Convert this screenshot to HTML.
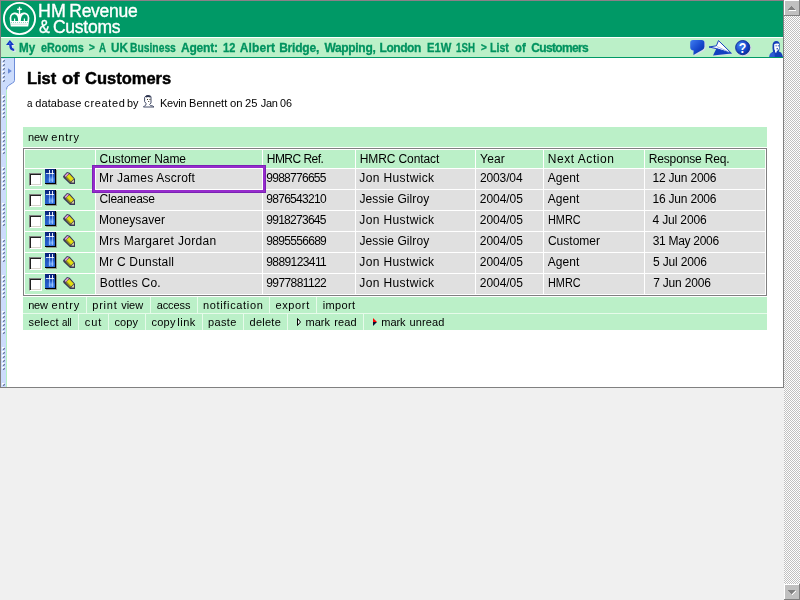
<!DOCTYPE html><html><head><meta charset="utf-8"><title>List of Customers</title><style>
html,body{margin:0;padding:0}
body{width:800px;height:600px;overflow:hidden;background:#f0f0f0;position:relative;font-family:"Liberation Sans", sans-serif}
.a,.t,svg.i{position:absolute}
.t{transform-origin:0 0;white-space:pre;line-height:20px;height:20px;color:#000}
.bc{font-weight:bold;font-size:12px;color:#00935f;-webkit-text-stroke:.3px currentColor}
.title{font-weight:bold;font-size:16.5px;-webkit-text-stroke:.45px currentColor}
.logo{font-size:17.5px;color:#fff;-webkit-text-stroke:.35px currentColor}
.tah{font-size:11px}
.tre{font-size:12px}
.g{will-change:transform;height:0}
.lg{background:#bbf0c8}
.gc{background:#e0e0e0}
.cb{width:11px;height:11px;background:#fff;border:1px solid;border-color:#808080 #fff #fff #808080;box-shadow:inset 1px 1px 0 #202020, inset -1px -1px 0 #d8d4cc;}
</style></head><body>
<div class="a" style="left:0;top:0;width:784px;height:388px;background:#808080"></div>
<div class="a" style="left:0;top:0;width:784px;height:1px;background:#8c8088"></div>
<div class="a" id="content" style="left:1px;top:58px;width:782px;height:329px;background:#fff"></div>
<div class="a" id="header" style="left:1px;top:1px;width:782px;height:36px;background:#009966"></div>
<div class="a" style="left:1px;top:37px;width:782px;height:1px;background:#fff"></div>
<div class="a" id="crumbs" style="left:1px;top:38px;width:782px;height:19px;background:#bbf0c8"></div>
<div class="a" style="left:1px;top:57px;width:782px;height:1px;background:#009966"></div>
<svg class="i" style="left:0;top:0" width="40" height="38" viewBox="0 0 40 38">
<circle cx="19.5" cy="18.5" r="15.6" fill="none" stroke="#fff" stroke-width="1.9"/>
<path fill="#fff" d="M10.8 26.6 L9.9 21 Q8.6 13.6 14 12.5 Q17.6 12 18.8 14 L18.8 10 L17.2 10 L17.2 8.6 L18.8 8.6 L18.8 6.8 L20.2 6.8 L20.2 8.6 L21.8 8.6 L21.8 10 L20.2 10 L20.2 14 Q21.4 12 25 12.5 Q30.4 13.6 29.1 21 L28.2 26.6 Z"/>
<path fill="#009966" d="M11.6 21 Q10.2 14.8 14.2 14.2 Q18 14 18.2 21 L15.2 21 L15.2 18.4 L14 18.4 L14 21 Z M20.8 21 Q21 14 24.8 14.2 Q28.8 14.8 27.4 21 L25 21 L25 18.4 L23.8 18.4 L23.8 21 Z"/>
<path stroke="#009966" stroke-width="0.8" stroke-dasharray="1 1" d="M11 22.5 H28 M11.5 24.2 H27.5" opacity=".5"/>
</svg>
<div id="logo" class="g"><span class="t logo" style="left:37.56px;top:0.5px;transform:scaleX(1.0191);">HM</span> <span class="t logo" style="left:69.26px;top:0.5px;letter-spacing:-0.259px;">Revenue</span> <span class="t logo" style="left:39.17px;top:17px;transform:scaleX(0.9237);">&amp;</span> <span class="t logo" style="left:52.92px;top:17px;letter-spacing:-0.245px;">Customs</span></div>
<svg class="i" style="left:4px;top:38px" width="14" height="16" viewBox="4 38 14 16">
<path d="M10.8 41.2 L15.2 46 L12.6 46 Q12.6 49.5 15.6 50 L15.6 52 Q10.6 52 10.2 46 L7.4 46 Z" fill="#e8e4f4" opacity=".9"/>
<path d="M9.9 40 L14 45 L11.6 45 Q11.6 48.4 14.2 48.8 L14.2 51 Q9.4 50.8 9.2 45 L6 45 Z" fill="#1238c4"/>
<circle cx="9.8" cy="43.4" r="0.9" fill="#3f78f0"/>
</svg>
<div id="bc" class="g"><span class="t bc" style="left:19.08px;top:38px;transform:scaleX(0.9711);">My</span> <span class="t bc" style="left:40.73px;top:38px;transform:scaleX(0.9036);">eRooms</span> <span class="t bc" style="left:88.94px;top:38px;font-size:10px;">&gt;</span> <span class="t bc" style="left:98.78px;top:38px;transform:scaleX(0.8157);">A</span> <span class="t bc" style="left:110.9px;top:38px;transform:scaleX(0.9741);">UK</span> <span class="t bc" style="left:130.48px;top:38px;transform:scaleX(0.8595);">Business</span> <span class="t bc" style="left:181.03px;top:38px;letter-spacing:-0.201px;">Agent:</span> <span class="t bc" style="left:222.9px;top:38px;transform:scaleX(0.9183);">12</span> <span class="t bc" style="left:239.72px;top:38px;letter-spacing:0.135px;">Albert</span> <span class="t bc" style="left:279.15px;top:38px;letter-spacing:-0.196px;">Bridge,</span> <span class="t bc" style="left:324.44px;top:38px;letter-spacing:-0.323px;">Wapping,</span> <span class="t bc" style="left:379.61px;top:38px;letter-spacing:-0.471px;">London</span> <span class="t bc" style="left:426.65px;top:38px;transform:scaleX(0.9363);">E1W</span> <span class="t bc" style="left:456.0px;top:38px;transform:scaleX(0.8099);">1SH</span> <span class="t bc" style="left:480.88px;top:38px;font-size:10px;">&gt;</span> <span class="t bc" style="left:490.17px;top:38px;transform:scaleX(0.8828);">List</span> <span class="t bc" style="left:515.41px;top:38px;transform:scaleX(0.9453);">of</span> <span class="t bc" style="left:531.28px;top:38px;letter-spacing:-0.653px;">Customers</span></div>
<svg class="i" style="left:686px;top:38px" width="98" height="20" viewBox="686 38 98 20">
<defs>
<linearGradient id="gb" x1="0" y1="0" x2="1" y2="1"><stop offset="0" stop-color="#3f7df0"/><stop offset=".55" stop-color="#1648cc"/><stop offset="1" stop-color="#062a9c"/></linearGradient>
<radialGradient id="gh" cx=".35" cy=".35" r=".75"><stop offset="0" stop-color="#4a86f4"/><stop offset=".6" stop-color="#1446c8"/><stop offset="1" stop-color="#062690"/></radialGradient>
</defs>
<path d="M694 41.2 H702.8 Q705.6 41.2 705.6 43.8 V48 Q705.6 50 703.8 51 L694.6 56.2 L694.8 51.8 Q691.4 51.4 691.4 48.4 V44 Q691.4 41.2 694 41.2Z" fill="#dcdcec" opacity=".8"/>
<path d="M693 40 H701.6 Q704.4 40 704.4 42.6 V46.8 Q704.4 48.8 702.6 49.8 L693.4 55 L693.6 50.6 Q690.2 50.2 690.2 47.2 V42.8 Q690.2 40 693 40Z" fill="url(#gb)"/>
<path d="M719.2 41.6 L732.6 54.2 L714 56.2 L717 49.6 L709.6 48 L717.2 46.8Z" fill="#dcdcec" opacity=".8"/>
<path d="M718.5 40.6 L731.4 53.2 L716.4 48.6 L709 47 L716.4 45.8Z" fill="#fff" stroke="#1440c0" stroke-width="1" stroke-linejoin="round"/>
<path d="M716.4 48.4 L731.6 53.4 L713 55.4Z" fill="#1440c0"/>
<path d="M717 46.6 L729 52" stroke="#7c98e0" stroke-width=".7" fill="none"/>
<circle cx="743.7" cy="48.6" r="7.7" fill="#d4d4e6" opacity=".9"/>
<circle cx="742.7" cy="47.6" r="7.1" fill="url(#gh)" stroke="#0c2c94" stroke-width=".9"/>
<path d="M773 51.8 Q772.2 47 772.6 44.6 Q773.2 41 776.2 41 Q779.7 41 779.7 44.6 L779.5 49.4 L778.8 51.6 Q781.6 52.4 782.2 54.4 L783 57 H769.4 L770 54.4 Q770.6 52.8 773 51.8Z" fill="#1440b8"/>
<path d="M769.4 57 L769.8 54.4 Q770.4 53 772.6 52.4 L774.4 52.2 L774.8 57Z" fill="#2c5cd4"/>
<path d="M774.2 44.2 Q776.4 43 779 43.8 L779 48.8 Q778.2 50.8 776.8 51 L776.6 52.4 L775 52.4 L775 50.6 Q774.2 49.6 774.2 48Z" fill="#fff"/>
<rect x="775.6" y="45.2" width="1" height="1.2" fill="#1440b8"/><rect x="777.8" y="45.2" width="1" height="1.2" fill="#1440b8"/><rect x="776.6" y="48" width="1.2" height="1.4" fill="#1440b8"/>
<text transform="translate(742.6 53) scale(.86 1)" text-anchor="middle" font-family="Liberation Sans, sans-serif" font-weight="bold" font-size="14.4" fill="#fff">?</text>
</svg>
<svg class="i" style="left:1px;top:58px" width="16" height="329" viewBox="1 58 16 329">
<defs><pattern id="dots" x="0" y="59" width="6" height="36" patternUnits="userSpaceOnUse">
<rect x="2" y="0" width="2" height="1" fill="#fff"/><rect x="2" y="1" width="1" height="1" fill="#fff" opacity=".8"/><rect x="4" y="1" width="1" height="1" fill="#6c7aa0"/><rect x="3" y="2" width="1" height="1" fill="#6c7aa0"/><rect x="3" y="1" width="1" height="1" fill="#6c7aa0" opacity=".4"/><rect x="4" y="2" width="1" height="1" fill="#6c7aa0" opacity=".4"/><rect x="2" y="4" width="2" height="1" fill="#fff"/><rect x="2" y="5" width="1" height="1" fill="#fff" opacity=".8"/><rect x="4" y="5" width="1" height="1" fill="#6c7aa0"/><rect x="3" y="6" width="1" height="1" fill="#6c7aa0"/><rect x="3" y="5" width="1" height="1" fill="#6c7aa0" opacity=".4"/><rect x="4" y="6" width="1" height="1" fill="#6c7aa0" opacity=".4"/><rect x="2" y="8" width="2" height="1" fill="#fff"/><rect x="2" y="9" width="1" height="1" fill="#fff" opacity=".8"/><rect x="4" y="9" width="1" height="1" fill="#6c7aa0"/><rect x="3" y="10" width="1" height="1" fill="#6c7aa0"/><rect x="3" y="9" width="1" height="1" fill="#6c7aa0" opacity=".4"/><rect x="4" y="10" width="1" height="1" fill="#6c7aa0" opacity=".4"/><rect x="2" y="12" width="2" height="1" fill="#fff"/><rect x="2" y="13" width="1" height="1" fill="#fff" opacity=".8"/><rect x="4" y="13" width="1" height="1" fill="#6c7aa0"/><rect x="3" y="14" width="1" height="1" fill="#6c7aa0"/><rect x="3" y="13" width="1" height="1" fill="#6c7aa0" opacity=".4"/><rect x="4" y="14" width="1" height="1" fill="#6c7aa0" opacity=".4"/><rect x="2" y="16" width="2" height="1" fill="#fff"/><rect x="2" y="17" width="1" height="1" fill="#fff" opacity=".8"/><rect x="4" y="17" width="1" height="1" fill="#6c7aa0"/><rect x="3" y="18" width="1" height="1" fill="#6c7aa0"/><rect x="3" y="17" width="1" height="1" fill="#6c7aa0" opacity=".4"/><rect x="4" y="18" width="1" height="1" fill="#6c7aa0" opacity=".4"/><rect x="2" y="20" width="2" height="1" fill="#fff"/><rect x="2" y="21" width="1" height="1" fill="#fff" opacity=".8"/><rect x="4" y="21" width="1" height="1" fill="#6c7aa0"/><rect x="3" y="22" width="1" height="1" fill="#6c7aa0"/><rect x="3" y="21" width="1" height="1" fill="#6c7aa0" opacity=".4"/><rect x="4" y="22" width="1" height="1" fill="#6c7aa0" opacity=".4"/>
</pattern></defs>
<path d="M1 58 H14.5 V80.5 Q14.5 82 12.5 83 L8.5 85.5 Q6.5 86.8 6.5 89 V387 H1Z" fill="#ccdcfc"/>
<path d="M14.5 58 V80.5 Q14.5 82 12.5 83 L8.5 85.5 Q6.5 86.8 6.5 89.5" fill="none" stroke="#6c8cd8" stroke-width="1"/>
<rect x="6" y="90" width="1" height="297" fill="#b4f0c4"/>
<rect x="1" y="58" width="6" height="329" fill="url(#dots)"/>
<path d="M8 68.2 L11.8 71 L8 73.8Z" fill="#6c8cd8"/>
</svg>
<h1 class="g" style="margin:0;font-size:0"><span class="t title" style="left:26.98px;top:68px;letter-spacing:-0.009px;">List</span> <span class="t title" style="left:61.96px;top:68px;transform:scaleX(1.1229);">of</span> <span class="t title" style="left:84.96px;top:68px;letter-spacing:0.008px;">Customers</span></h1>
<div id="sub" class="g"><span class="t tah" style="left:26.82px;top:93px;transform:scaleX(0.8947);">a</span> <span class="t tah" style="left:35.24px;top:93px;letter-spacing:0.11px;">database</span> <span class="t tah" style="left:84.33px;top:93px;letter-spacing:0.641px;">created</span> <span class="t tah" style="left:126.57px;top:93px;transform:scaleX(0.9863);">by</span> <span class="t tah" style="left:159.98px;top:93px;letter-spacing:-0.19px;">Kevin</span> <span class="t tah" style="left:189.0px;top:93px;letter-spacing:0.047px;">Bennett</span> <span class="t tah" style="left:230.33px;top:93px;transform:scaleX(1.0287);">on</span> <span class="t tah" style="left:245.45px;top:93px;transform:scaleX(1.0142);">25</span> <span class="t tah" style="left:260.83px;top:93px;letter-spacing:-0.37px;">Jan</span> <span class="t tah" style="left:279.77px;top:93px;transform:scaleX(0.9818);">06</span></div>
<svg class="i" style="left:142px;top:94px" width="14" height="14" viewBox="142 94 14 14">
<path d="M146.4 95.5 H149.6 L151 96.6 V103 L149.6 104.6 L150.6 105.6 L152.8 106 L154 107 H143.4 L144.6 105.8 L146 104.8 V103.4 L144.6 101.6 V97.4Z" fill="#fff" stroke="#444c68" stroke-width="1" stroke-linejoin="round"/>
<path d="M145.6 97 Q148 95.4 150.6 97" stroke="#30364e" stroke-width="1.4" fill="none"/>
<rect x="147" y="99" width="1" height="1" fill="#3a3420"/><rect x="149.4" y="99" width="1" height="1" fill="#3a3420"/><rect x="148.2" y="101" width="1" height="1" fill="#3a3420"/>
</svg>
<div class="a lg" style="left:23px;top:127px;width:744px;height:20px"></div>
<div id="newentry" class="g"><span class="t tah" style="left:28.09px;top:127px;letter-spacing:-0.134px;">new</span> <span class="t tah" style="left:51.32px;top:127px;letter-spacing:0.804px;">entry</span></div>
<div class="a" id="tbl" style="left:23px;top:148px;width:742px;height:146px;border:1px solid #808080;background:#fff"></div>
<div class="a lg" style="left:25px;top:150px;width:70px;height:18px"></div>
<div class="a lg" style="left:96px;top:150px;width:166px;height:18px"></div>
<div class="a lg" style="left:263px;top:150px;width:92px;height:18px"></div>
<div class="a lg" style="left:356px;top:150px;width:119px;height:18px"></div>
<div class="a lg" style="left:476px;top:150px;width:67px;height:18px"></div>
<div class="a lg" style="left:544px;top:150px;width:100px;height:18px"></div>
<div class="a lg" style="left:645px;top:150px;width:120px;height:18px"></div>
<div class="a lg" style="left:25px;top:169px;width:70px;height:20px"></div>
<div class="a gc" style="left:96px;top:169px;width:166px;height:20px"></div>
<div class="a gc" style="left:263px;top:169px;width:92px;height:20px"></div>
<div class="a gc" style="left:356px;top:169px;width:119px;height:20px"></div>
<div class="a gc" style="left:476px;top:169px;width:67px;height:20px"></div>
<div class="a gc" style="left:544px;top:169px;width:100px;height:20px"></div>
<div class="a gc" style="left:645px;top:169px;width:120px;height:20px"></div>
<div class="a lg" style="left:25px;top:190px;width:70px;height:20px"></div>
<div class="a gc" style="left:96px;top:190px;width:166px;height:20px"></div>
<div class="a gc" style="left:263px;top:190px;width:92px;height:20px"></div>
<div class="a gc" style="left:356px;top:190px;width:119px;height:20px"></div>
<div class="a gc" style="left:476px;top:190px;width:67px;height:20px"></div>
<div class="a gc" style="left:544px;top:190px;width:100px;height:20px"></div>
<div class="a gc" style="left:645px;top:190px;width:120px;height:20px"></div>
<div class="a lg" style="left:25px;top:211px;width:70px;height:20px"></div>
<div class="a gc" style="left:96px;top:211px;width:166px;height:20px"></div>
<div class="a gc" style="left:263px;top:211px;width:92px;height:20px"></div>
<div class="a gc" style="left:356px;top:211px;width:119px;height:20px"></div>
<div class="a gc" style="left:476px;top:211px;width:67px;height:20px"></div>
<div class="a gc" style="left:544px;top:211px;width:100px;height:20px"></div>
<div class="a gc" style="left:645px;top:211px;width:120px;height:20px"></div>
<div class="a lg" style="left:25px;top:232px;width:70px;height:20px"></div>
<div class="a gc" style="left:96px;top:232px;width:166px;height:20px"></div>
<div class="a gc" style="left:263px;top:232px;width:92px;height:20px"></div>
<div class="a gc" style="left:356px;top:232px;width:119px;height:20px"></div>
<div class="a gc" style="left:476px;top:232px;width:67px;height:20px"></div>
<div class="a gc" style="left:544px;top:232px;width:100px;height:20px"></div>
<div class="a gc" style="left:645px;top:232px;width:120px;height:20px"></div>
<div class="a lg" style="left:25px;top:253px;width:70px;height:20px"></div>
<div class="a gc" style="left:96px;top:253px;width:166px;height:20px"></div>
<div class="a gc" style="left:263px;top:253px;width:92px;height:20px"></div>
<div class="a gc" style="left:356px;top:253px;width:119px;height:20px"></div>
<div class="a gc" style="left:476px;top:253px;width:67px;height:20px"></div>
<div class="a gc" style="left:544px;top:253px;width:100px;height:20px"></div>
<div class="a gc" style="left:645px;top:253px;width:120px;height:20px"></div>
<div class="a lg" style="left:25px;top:274px;width:70px;height:20px"></div>
<div class="a gc" style="left:96px;top:274px;width:166px;height:20px"></div>
<div class="a gc" style="left:263px;top:274px;width:92px;height:20px"></div>
<div class="a gc" style="left:356px;top:274px;width:119px;height:20px"></div>
<div class="a gc" style="left:476px;top:274px;width:67px;height:20px"></div>
<div class="a gc" style="left:544px;top:274px;width:100px;height:20px"></div>
<div class="a gc" style="left:645px;top:274px;width:120px;height:20px"></div>
<div class="a" style="left:92px;top:165px;width:168px;height:22px;border:3px solid #962ccc;box-shadow:inset 0 0 0 1px #fff, 0 0 0 0 #000"></div>
<div class="a" style="left:92px;top:165px;width:172px;height:26px;border:1px solid #7a22b4"></div>
<div class="a cb" style="left:29px;top:173px"></div>
<svg class="i" style="left:45px;top:169px" width="12" height="16" viewBox="0 0 12 16">
<defs><linearGradient id="db0" x1="0" y1="0" x2="0" y2="1"><stop offset="0" stop-color="#082478"/><stop offset=".27" stop-color="#0a2c8c"/><stop offset=".3" stop-color="#2050b8"/><stop offset="1" stop-color="#2460cc"/></linearGradient>
<radialGradient id="dg0" cx=".6" cy=".65" r=".5"><stop offset="0" stop-color="#7cb4ff"/><stop offset=".5" stop-color="#4c8cf0" stop-opacity=".8"/><stop offset="1" stop-color="#2a68dc" stop-opacity="0"/></radialGradient></defs>
<rect x="1" y="1" width="11" height="15" fill="#7c6c6c" opacity=".6"/>
<rect x="0" y="0" width="11" height="15" fill="#000"/>
<rect x="0" y="0" width="10" height="14" fill="url(#db0)"/>
<rect x="1" y="5" width="9" height="9" fill="url(#dg0)"/>
<rect x="4" y="1" width="1" height="4" fill="#fff" opacity=".9"/><rect x="7" y="1" width="1" height="4" fill="#fff" opacity=".9"/><rect x="4" y="5" width="1" height="8" fill="#c4dcff" opacity=".6"/><rect x="7" y="5" width="1" height="8" fill="#c4dcff" opacity=".6"/>
<rect x="1" y="4" width="8" height="1" fill="#fff" opacity=".8"/>
</svg>
<svg class="i" style="left:62px;top:171px" width="15" height="14" viewBox="62 171 15 14">
<path d="M63 176.2 L67 172 L69.7 172.7 L75 178.7 L75 183.9 L70 183.9 L63.6 178Z" fill="#3a3a58"/>
<path d="M64.5 175.9 L67.2 173.1 L69 173.6 L65.9 176.9Z" fill="#e49cd8"/>
<path d="M66.5 176.7 L69.3 173.9 L73.8 178.8 L71 181.6Z" fill="#e2de12"/>
<path d="M65.5 177.5 L66.5 176.7 L71 181.6 L70.2 182.5Z" fill="#8e8a24"/>
<path d="M71.2 182.4 L73.8 179.6 L74 182.6Z" fill="#ece0a4"/>
</svg>
<div class="a cb" style="left:29px;top:194px"></div>
<svg class="i" style="left:45px;top:190px" width="12" height="16" viewBox="0 0 12 16">
<defs><linearGradient id="db1" x1="0" y1="0" x2="0" y2="1"><stop offset="0" stop-color="#082478"/><stop offset=".27" stop-color="#0a2c8c"/><stop offset=".3" stop-color="#2050b8"/><stop offset="1" stop-color="#2460cc"/></linearGradient>
<radialGradient id="dg1" cx=".6" cy=".65" r=".5"><stop offset="0" stop-color="#7cb4ff"/><stop offset=".5" stop-color="#4c8cf0" stop-opacity=".8"/><stop offset="1" stop-color="#2a68dc" stop-opacity="0"/></radialGradient></defs>
<rect x="1" y="1" width="11" height="15" fill="#7c6c6c" opacity=".6"/>
<rect x="0" y="0" width="11" height="15" fill="#000"/>
<rect x="0" y="0" width="10" height="14" fill="url(#db1)"/>
<rect x="1" y="5" width="9" height="9" fill="url(#dg1)"/>
<rect x="4" y="1" width="1" height="4" fill="#fff" opacity=".9"/><rect x="7" y="1" width="1" height="4" fill="#fff" opacity=".9"/><rect x="4" y="5" width="1" height="8" fill="#c4dcff" opacity=".6"/><rect x="7" y="5" width="1" height="8" fill="#c4dcff" opacity=".6"/>
<rect x="1" y="4" width="8" height="1" fill="#fff" opacity=".8"/>
</svg>
<svg class="i" style="left:62px;top:192px" width="15" height="14" viewBox="62 171 15 14">
<path d="M63 176.2 L67 172 L69.7 172.7 L75 178.7 L75 183.9 L70 183.9 L63.6 178Z" fill="#3a3a58"/>
<path d="M64.5 175.9 L67.2 173.1 L69 173.6 L65.9 176.9Z" fill="#e49cd8"/>
<path d="M66.5 176.7 L69.3 173.9 L73.8 178.8 L71 181.6Z" fill="#e2de12"/>
<path d="M65.5 177.5 L66.5 176.7 L71 181.6 L70.2 182.5Z" fill="#8e8a24"/>
<path d="M71.2 182.4 L73.8 179.6 L74 182.6Z" fill="#ece0a4"/>
</svg>
<div class="a cb" style="left:29px;top:215px"></div>
<svg class="i" style="left:45px;top:211px" width="12" height="16" viewBox="0 0 12 16">
<defs><linearGradient id="db2" x1="0" y1="0" x2="0" y2="1"><stop offset="0" stop-color="#082478"/><stop offset=".27" stop-color="#0a2c8c"/><stop offset=".3" stop-color="#2050b8"/><stop offset="1" stop-color="#2460cc"/></linearGradient>
<radialGradient id="dg2" cx=".6" cy=".65" r=".5"><stop offset="0" stop-color="#7cb4ff"/><stop offset=".5" stop-color="#4c8cf0" stop-opacity=".8"/><stop offset="1" stop-color="#2a68dc" stop-opacity="0"/></radialGradient></defs>
<rect x="1" y="1" width="11" height="15" fill="#7c6c6c" opacity=".6"/>
<rect x="0" y="0" width="11" height="15" fill="#000"/>
<rect x="0" y="0" width="10" height="14" fill="url(#db2)"/>
<rect x="1" y="5" width="9" height="9" fill="url(#dg2)"/>
<rect x="4" y="1" width="1" height="4" fill="#fff" opacity=".9"/><rect x="7" y="1" width="1" height="4" fill="#fff" opacity=".9"/><rect x="4" y="5" width="1" height="8" fill="#c4dcff" opacity=".6"/><rect x="7" y="5" width="1" height="8" fill="#c4dcff" opacity=".6"/>
<rect x="1" y="4" width="8" height="1" fill="#fff" opacity=".8"/>
</svg>
<svg class="i" style="left:62px;top:213px" width="15" height="14" viewBox="62 171 15 14">
<path d="M63 176.2 L67 172 L69.7 172.7 L75 178.7 L75 183.9 L70 183.9 L63.6 178Z" fill="#3a3a58"/>
<path d="M64.5 175.9 L67.2 173.1 L69 173.6 L65.9 176.9Z" fill="#e49cd8"/>
<path d="M66.5 176.7 L69.3 173.9 L73.8 178.8 L71 181.6Z" fill="#e2de12"/>
<path d="M65.5 177.5 L66.5 176.7 L71 181.6 L70.2 182.5Z" fill="#8e8a24"/>
<path d="M71.2 182.4 L73.8 179.6 L74 182.6Z" fill="#ece0a4"/>
</svg>
<div class="a cb" style="left:29px;top:236px"></div>
<svg class="i" style="left:45px;top:232px" width="12" height="16" viewBox="0 0 12 16">
<defs><linearGradient id="db3" x1="0" y1="0" x2="0" y2="1"><stop offset="0" stop-color="#082478"/><stop offset=".27" stop-color="#0a2c8c"/><stop offset=".3" stop-color="#2050b8"/><stop offset="1" stop-color="#2460cc"/></linearGradient>
<radialGradient id="dg3" cx=".6" cy=".65" r=".5"><stop offset="0" stop-color="#7cb4ff"/><stop offset=".5" stop-color="#4c8cf0" stop-opacity=".8"/><stop offset="1" stop-color="#2a68dc" stop-opacity="0"/></radialGradient></defs>
<rect x="1" y="1" width="11" height="15" fill="#7c6c6c" opacity=".6"/>
<rect x="0" y="0" width="11" height="15" fill="#000"/>
<rect x="0" y="0" width="10" height="14" fill="url(#db3)"/>
<rect x="1" y="5" width="9" height="9" fill="url(#dg3)"/>
<rect x="4" y="1" width="1" height="4" fill="#fff" opacity=".9"/><rect x="7" y="1" width="1" height="4" fill="#fff" opacity=".9"/><rect x="4" y="5" width="1" height="8" fill="#c4dcff" opacity=".6"/><rect x="7" y="5" width="1" height="8" fill="#c4dcff" opacity=".6"/>
<rect x="1" y="4" width="8" height="1" fill="#fff" opacity=".8"/>
</svg>
<svg class="i" style="left:62px;top:234px" width="15" height="14" viewBox="62 171 15 14">
<path d="M63 176.2 L67 172 L69.7 172.7 L75 178.7 L75 183.9 L70 183.9 L63.6 178Z" fill="#3a3a58"/>
<path d="M64.5 175.9 L67.2 173.1 L69 173.6 L65.9 176.9Z" fill="#e49cd8"/>
<path d="M66.5 176.7 L69.3 173.9 L73.8 178.8 L71 181.6Z" fill="#e2de12"/>
<path d="M65.5 177.5 L66.5 176.7 L71 181.6 L70.2 182.5Z" fill="#8e8a24"/>
<path d="M71.2 182.4 L73.8 179.6 L74 182.6Z" fill="#ece0a4"/>
</svg>
<div class="a cb" style="left:29px;top:257px"></div>
<svg class="i" style="left:45px;top:253px" width="12" height="16" viewBox="0 0 12 16">
<defs><linearGradient id="db4" x1="0" y1="0" x2="0" y2="1"><stop offset="0" stop-color="#082478"/><stop offset=".27" stop-color="#0a2c8c"/><stop offset=".3" stop-color="#2050b8"/><stop offset="1" stop-color="#2460cc"/></linearGradient>
<radialGradient id="dg4" cx=".6" cy=".65" r=".5"><stop offset="0" stop-color="#7cb4ff"/><stop offset=".5" stop-color="#4c8cf0" stop-opacity=".8"/><stop offset="1" stop-color="#2a68dc" stop-opacity="0"/></radialGradient></defs>
<rect x="1" y="1" width="11" height="15" fill="#7c6c6c" opacity=".6"/>
<rect x="0" y="0" width="11" height="15" fill="#000"/>
<rect x="0" y="0" width="10" height="14" fill="url(#db4)"/>
<rect x="1" y="5" width="9" height="9" fill="url(#dg4)"/>
<rect x="4" y="1" width="1" height="4" fill="#fff" opacity=".9"/><rect x="7" y="1" width="1" height="4" fill="#fff" opacity=".9"/><rect x="4" y="5" width="1" height="8" fill="#c4dcff" opacity=".6"/><rect x="7" y="5" width="1" height="8" fill="#c4dcff" opacity=".6"/>
<rect x="1" y="4" width="8" height="1" fill="#fff" opacity=".8"/>
</svg>
<svg class="i" style="left:62px;top:255px" width="15" height="14" viewBox="62 171 15 14">
<path d="M63 176.2 L67 172 L69.7 172.7 L75 178.7 L75 183.9 L70 183.9 L63.6 178Z" fill="#3a3a58"/>
<path d="M64.5 175.9 L67.2 173.1 L69 173.6 L65.9 176.9Z" fill="#e49cd8"/>
<path d="M66.5 176.7 L69.3 173.9 L73.8 178.8 L71 181.6Z" fill="#e2de12"/>
<path d="M65.5 177.5 L66.5 176.7 L71 181.6 L70.2 182.5Z" fill="#8e8a24"/>
<path d="M71.2 182.4 L73.8 179.6 L74 182.6Z" fill="#ece0a4"/>
</svg>
<div class="a cb" style="left:29px;top:278px"></div>
<svg class="i" style="left:45px;top:274px" width="12" height="16" viewBox="0 0 12 16">
<defs><linearGradient id="db5" x1="0" y1="0" x2="0" y2="1"><stop offset="0" stop-color="#082478"/><stop offset=".27" stop-color="#0a2c8c"/><stop offset=".3" stop-color="#2050b8"/><stop offset="1" stop-color="#2460cc"/></linearGradient>
<radialGradient id="dg5" cx=".6" cy=".65" r=".5"><stop offset="0" stop-color="#7cb4ff"/><stop offset=".5" stop-color="#4c8cf0" stop-opacity=".8"/><stop offset="1" stop-color="#2a68dc" stop-opacity="0"/></radialGradient></defs>
<rect x="1" y="1" width="11" height="15" fill="#7c6c6c" opacity=".6"/>
<rect x="0" y="0" width="11" height="15" fill="#000"/>
<rect x="0" y="0" width="10" height="14" fill="url(#db5)"/>
<rect x="1" y="5" width="9" height="9" fill="url(#dg5)"/>
<rect x="4" y="1" width="1" height="4" fill="#fff" opacity=".9"/><rect x="7" y="1" width="1" height="4" fill="#fff" opacity=".9"/><rect x="4" y="5" width="1" height="8" fill="#c4dcff" opacity=".6"/><rect x="7" y="5" width="1" height="8" fill="#c4dcff" opacity=".6"/>
<rect x="1" y="4" width="8" height="1" fill="#fff" opacity=".8"/>
</svg>
<svg class="i" style="left:62px;top:276px" width="15" height="14" viewBox="62 171 15 14">
<path d="M63 176.2 L67 172 L69.7 172.7 L75 178.7 L75 183.9 L70 183.9 L63.6 178Z" fill="#3a3a58"/>
<path d="M64.5 175.9 L67.2 173.1 L69 173.6 L65.9 176.9Z" fill="#e49cd8"/>
<path d="M66.5 176.7 L69.3 173.9 L73.8 178.8 L71 181.6Z" fill="#e2de12"/>
<path d="M65.5 177.5 L66.5 176.7 L71 181.6 L70.2 182.5Z" fill="#8e8a24"/>
<path d="M71.2 182.4 L73.8 179.6 L74 182.6Z" fill="#ece0a4"/>
</svg>
<div id="tt" class="g"><span class="t tre" style="left:99.6px;top:149px;letter-spacing:-0.079px;">Customer Name</span> <span class="t tre" style="left:266.76px;top:149px;letter-spacing:-0.52px;">HMRC Ref.</span> <span class="t tre" style="left:359.68px;top:149px;letter-spacing:-0.092px;">HMRC Contact</span> <span class="t tre" style="left:480.07px;top:149px;letter-spacing:0.162px;">Year</span> <span class="t tre" style="left:547.8px;top:149px;letter-spacing:0.538px;">Next Action</span> <span class="t tre" style="left:648.72px;top:149px;letter-spacing:-0.151px;">Response Req.</span> <span class="t tre" style="left:98.95px;top:168px;letter-spacing:0.22px;">Mr James Ascroft</span> <span class="t tre" style="left:266.22px;top:168px;letter-spacing:-0.718px;">9988776655</span> <span class="t tre" style="left:359.31px;top:168px;letter-spacing:0.372px;">Jon Hustwick</span> <span class="t tre" style="left:479.98px;top:168px;letter-spacing:-0.126px;">2003/04</span> <span class="t tre" style="left:547.72px;top:168px;letter-spacing:0.073px;">Agent</span> <span class="t tre" style="left:652.51px;top:168px;letter-spacing:-0.207px;">12 Jun 2006</span> <span class="t tre" style="left:99.6px;top:189px;letter-spacing:-0.247px;">Cleanease</span> <span class="t tre" style="left:266.25px;top:189px;letter-spacing:-0.711px;">9876543210</span> <span class="t tre" style="left:359.49px;top:189px;letter-spacing:0.083px;">Jessie Gilroy</span> <span class="t tre" style="left:479.86px;top:189px;letter-spacing:-0.066px;">2004/05</span> <span class="t tre" style="left:547.72px;top:189px;letter-spacing:0.073px;">Agent</span> <span class="t tre" style="left:652.51px;top:189px;letter-spacing:-0.207px;">16 Jun 2006</span> <span class="t tre" style="left:98.92px;top:210px;letter-spacing:0.089px;">Moneysaver</span> <span class="t tre" style="left:266.22px;top:210px;letter-spacing:-0.718px;">9918273645</span> <span class="t tre" style="left:359.31px;top:210px;letter-spacing:0.372px;">Jon Hustwick</span> <span class="t tre" style="left:479.86px;top:210px;letter-spacing:-0.066px;">2004/05</span> <span class="t tre" style="left:547.9px;top:210px;transform:scaleX(0.9058);">HMRC</span> <span class="t tre" style="left:652.44px;top:210px;letter-spacing:-0.128px;">4 Jul 2006</span> <span class="t tre" style="left:99.03px;top:231px;letter-spacing:0.325px;">Mrs Margaret Jordan</span> <span class="t tre" style="left:266.31px;top:231px;letter-spacing:-0.695px;">9895556689</span> <span class="t tre" style="left:359.49px;top:231px;letter-spacing:0.083px;">Jessie Gilroy</span> <span class="t tre" style="left:479.86px;top:231px;letter-spacing:-0.066px;">2004/05</span> <span class="t tre" style="left:547.94px;top:231px;letter-spacing:0.015px;">Customer</span> <span class="t tre" style="left:652.73px;top:231px;letter-spacing:-0.303px;">31 May 2006</span> <span class="t tre" style="left:99.1px;top:252px;letter-spacing:0.182px;">Mr C Dunstall</span> <span class="t tre" style="left:266.25px;top:252px;letter-spacing:-0.595px;">9889123411</span> <span class="t tre" style="left:359.31px;top:252px;letter-spacing:0.372px;">Jon Hustwick</span> <span class="t tre" style="left:479.86px;top:252px;letter-spacing:-0.066px;">2004/05</span> <span class="t tre" style="left:547.72px;top:252px;letter-spacing:0.073px;">Agent</span> <span class="t tre" style="left:653.02px;top:252px;letter-spacing:-0.156px;">5 Jul 2006</span> <span class="t tre" style="left:99.66px;top:273px;letter-spacing:0.233px;">Bottles Co.</span> <span class="t tre" style="left:266.25px;top:273px;letter-spacing:-0.597px;">9977881122</span> <span class="t tre" style="left:359.31px;top:273px;letter-spacing:0.372px;">Jon Hustwick</span> <span class="t tre" style="left:479.86px;top:273px;letter-spacing:-0.066px;">2004/05</span> <span class="t tre" style="left:547.9px;top:273px;transform:scaleX(0.9058);">HMRC</span> <span class="t tre" style="left:653.16px;top:273px;letter-spacing:-0.182px;">7 Jun 2006</span></div>
<div class="a lg" style="left:23px;top:297px;width:744px;height:16px"></div>
<div class="a" style="left:23px;top:313px;width:744px;height:1px;background:#e6fbea"></div>
<div class="a lg" style="left:23px;top:314px;width:744px;height:16px"></div>
<div class="a" style="left:86px;top:297px;width:1px;height:16px;background:#e6fbea"></div>
<div class="a" style="left:150px;top:297px;width:1px;height:16px;background:#e6fbea"></div>
<div class="a" style="left:197px;top:297px;width:1px;height:16px;background:#e6fbea"></div>
<div class="a" style="left:269px;top:297px;width:1px;height:16px;background:#e6fbea"></div>
<div class="a" style="left:316px;top:297px;width:1px;height:16px;background:#e6fbea"></div>
<div class="a" style="left:78px;top:314px;width:1px;height:16px;background:#e6fbea"></div>
<div class="a" style="left:108px;top:314px;width:1px;height:16px;background:#e6fbea"></div>
<div class="a" style="left:145px;top:314px;width:1px;height:16px;background:#e6fbea"></div>
<div class="a" style="left:202px;top:314px;width:1px;height:16px;background:#e6fbea"></div>
<div class="a" style="left:243px;top:314px;width:1px;height:16px;background:#e6fbea"></div>
<div class="a" style="left:287px;top:314px;width:1px;height:16px;background:#e6fbea"></div>
<div class="a" style="left:363px;top:314px;width:1px;height:16px;background:#e6fbea"></div>
<div id="tb1" class="g"><span class="t tah" style="left:28.13px;top:295px;letter-spacing:-0.242px;">new</span> <span class="t tah" style="left:51.5px;top:295px;letter-spacing:0.807px;">entry</span> <span class="t tah" style="left:92.3px;top:295px;letter-spacing:0.769px;">print</span> <span class="t tah" style="left:121.15px;top:295px;letter-spacing:0.001px;">view</span> <span class="t tah" style="left:156.66px;top:295px;letter-spacing:-0.09px;">access</span> <span class="t tah" style="left:202.93px;top:295px;letter-spacing:0.665px;">notification</span> <span class="t tah" style="left:275.48px;top:295px;letter-spacing:0.636px;">export</span> <span class="t tah" style="left:322.7px;top:295px;letter-spacing:0.359px;">import</span></div>
<div id="tb2" class="g"><span class="t tah" style="left:28.4px;top:312px;letter-spacing:0.267px;">select</span> <span class="t tah" style="left:61.94px;top:312px;transform:scaleX(0.8864);">all</span> <span class="t tah" style="left:84.69px;top:312px;letter-spacing:1.007px;">cut</span> <span class="t tah" style="left:114.4px;top:312px;letter-spacing:0.146px;">copy</span> <span class="t tah" style="left:151.56px;top:312px;letter-spacing:0.212px;">copy</span> <span class="t tah" style="left:177.35px;top:312px;letter-spacing:0.454px;">link</span> <span class="t tah" style="left:207.89px;top:312px;letter-spacing:0.408px;">paste</span> <span class="t tah" style="left:249.56px;top:312px;letter-spacing:0.247px;">delete</span> <span class="t tah" style="left:305.51px;top:312px;letter-spacing:0.041px;">mark</span> <span class="t tah" style="left:334.24px;top:312px;letter-spacing:0.119px;">read</span> <span class="t tah" style="left:381.34px;top:312px;letter-spacing:-0.06px;">mark</span> <span class="t tah" style="left:409.5px;top:312px;letter-spacing:0.129px;">unread</span></div>
<svg class="i" style="left:296px;top:317px" width="6" height="10" viewBox="296 317 6 10"><path d="M297.5 318.5 V325.5 L300.5 322Z" fill="#fff" stroke="#000" stroke-width="1"/></svg>
<svg class="i" style="left:372px;top:317px" width="6" height="10" viewBox="372 317 6 10"><path d="M373 318 L377 322 H373Z" fill="#f00"/><path d="M373 322 H377 L373 326Z" fill="#0a0a30"/></svg>
<div class="a" id="sb" style="left:784px;top:0;width:16px;height:600px;background:repeating-conic-gradient(#fff 0 25%,#c0c0c0 0 50%) 0 0/2px 2px"></div>
<svg class="i" style="left:784px;top:0px" width="16" height="16" viewBox="0 0 16 16" shape-rendering="crispEdges"><rect width="16" height="16" fill="#c0c0c0"/><rect width="16" height="1" fill="#fff"/><rect width="1" height="16" fill="#fff"/><rect x="15" width="1" height="16" fill="#808080"/><rect y="15" width="16" height="1" fill="#808080"/><rect x="7" y="6" width="1" height="1" fill="#808080"/><rect x="6" y="7" width="3" height="1" fill="#808080"/><rect x="5" y="8" width="5" height="1" fill="#808080"/><rect x="4" y="9" width="7" height="1" fill="#808080"/><rect x="5" y="10" width="7" height="1" fill="#fff"/></svg>
<svg class="i" style="left:784px;top:584px" width="16" height="16" viewBox="0 0 16 16" shape-rendering="crispEdges"><rect width="16" height="16" fill="#c0c0c0"/><rect width="16" height="1" fill="#fff"/><rect width="1" height="16" fill="#fff"/><rect x="15" width="1" height="16" fill="#808080"/><rect y="15" width="16" height="1" fill="#808080"/><rect x="4" y="6" width="7" height="1" fill="#808080"/><rect x="5" y="7" width="5" height="1" fill="#808080"/><rect x="6" y="8" width="3" height="1" fill="#808080"/><rect x="7" y="9" width="1" height="1" fill="#808080"/><rect x="8" y="10" width="1" height="1" fill="#fff"/><rect x="9" y="9" width="1" height="1" fill="#fff"/><rect x="10" y="8" width="1" height="1" fill="#fff"/><rect x="11" y="7" width="1" height="1" fill="#fff"/></svg>
</body></html>
